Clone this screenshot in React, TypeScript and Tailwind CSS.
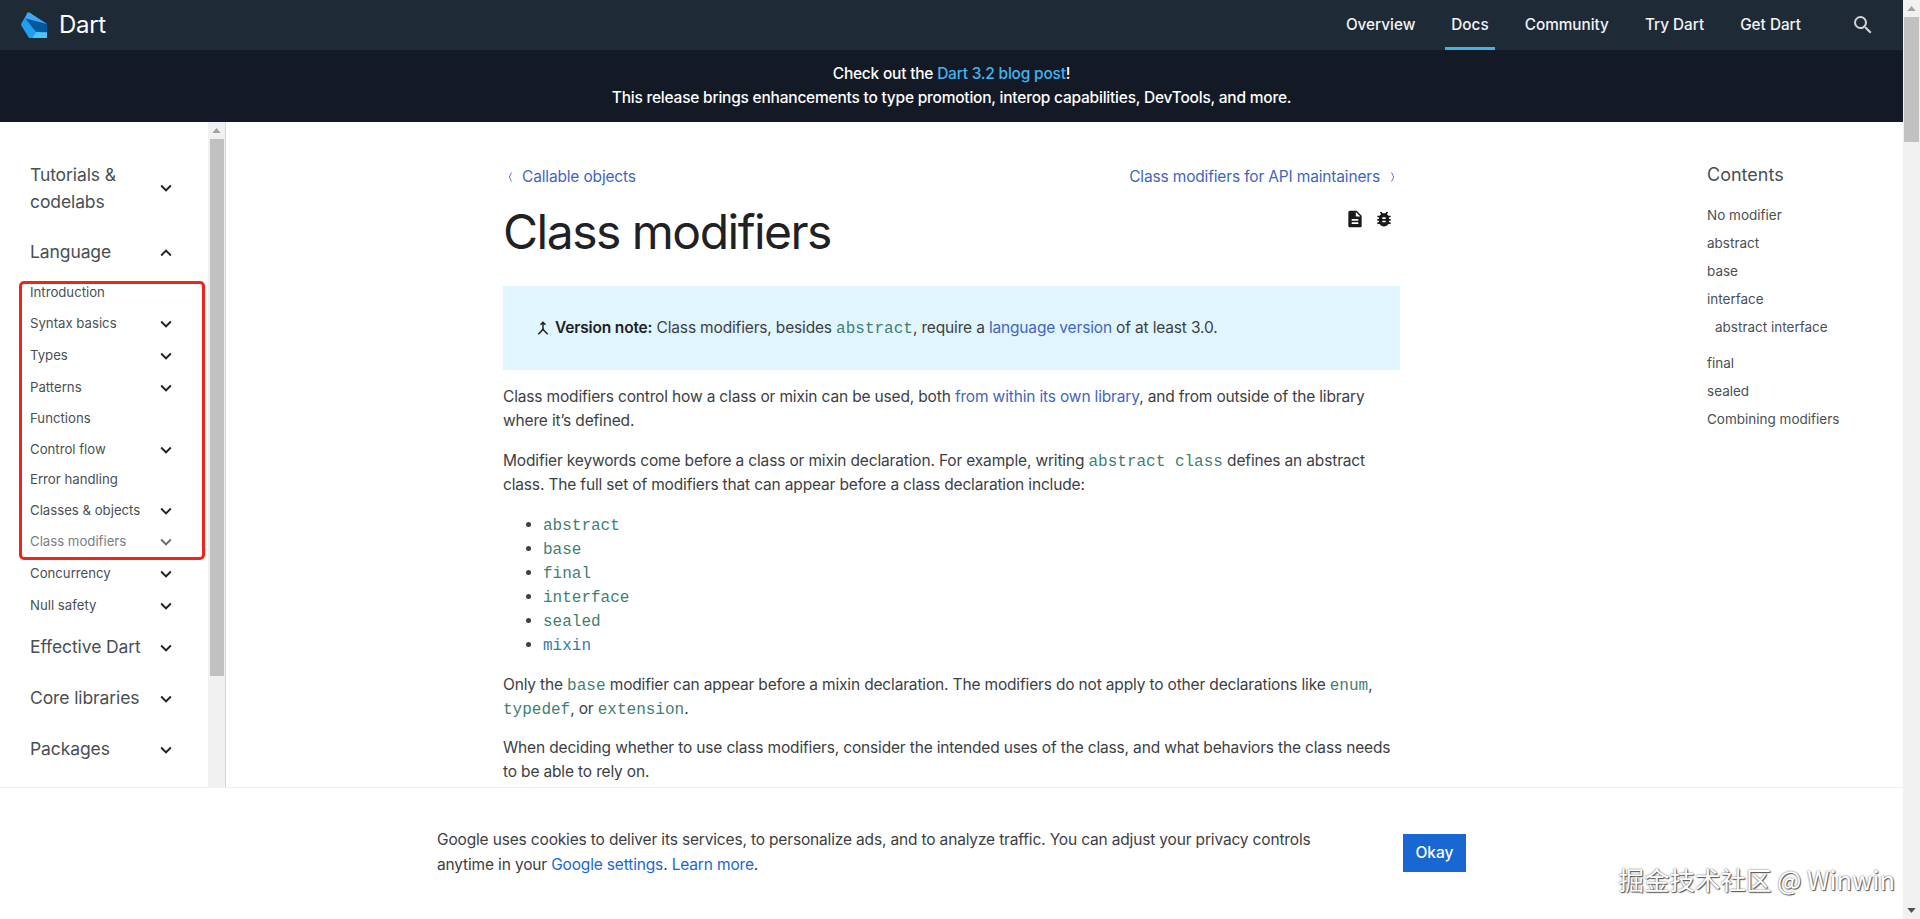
import React from 'react';
import { MdBugReport, MdDescription, MdExpandLess, MdExpandMore, MdMerge, MdSearch } from 'react-icons/md';

const font = "font-['Inter','Noto_Sans',sans-serif]";

const navLinks = ['Overview', 'Docs', 'Community', 'Try Dart', 'Get Dart'];

const languageItems: { label: string; open?: boolean; muted?: boolean; h: string }[] = [
  { label: 'Introduction', h: 'h-[30px]' },
  { label: 'Syntax basics', open: true, h: 'h-[32px]' },
  { label: 'Types', open: true, h: 'h-[32px]' },
  { label: 'Patterns', open: true, h: 'h-[32px]' },
  { label: 'Functions', h: 'h-[30px]' },
  { label: 'Control flow', open: true, h: 'h-[31px]' },
  { label: 'Error handling', h: 'h-[30px]' },
  { label: 'Classes & objects', open: true, h: 'h-[31px]' },
  { label: 'Class modifiers', open: true, muted: true, h: 'h-[32px]' },
  { label: 'Concurrency', open: true, h: 'h-[32px]' },
  { label: 'Null safety', open: true, h: 'h-[32px]' },
];

const tocItems = [
  { label: 'No modifier', h: 'h-[28px]' },
  { label: 'abstract', h: 'h-[28px]' },
  { label: 'base', h: 'h-[28px]' },
  { label: 'interface', h: 'h-[28px]' },
  { label: 'abstract interface', h: 'h-[36px] pl-2 pb-2' },
  { label: 'final', h: 'h-[28px]' },
  { label: 'sealed', h: 'h-[28px]' },
  { label: 'Combining modifiers', h: 'h-[28px]' },
];

const Code: React.FC<{ children: React.ReactNode; blue?: boolean }> = ({ children, blue }) => (
  <code className={`font-['Liberation_Mono',monospace] text-[16px] leading-none tracking-normal ${blue ? 'text-[#2f7cb3]' : 'text-[#3f7f74]'}`}>{children}</code>
);

const A: React.FC<{ children: React.ReactNode }> = ({ children }) => <a className="text-[#3f66bd]">{children}</a>;

const DartLogo = () => (
  <svg viewBox="0 0 26 26" className="w-[26px] h-[26px]">
    <path d="M6.5.7.6 11c-.6 1-.6 2 0 3L8 26h18V12L12 3C10 1.6 8 0 6.5.7z" fill="#1f9fee" />
    <path d="M6.5.7 4.5 6.5 26 12 12 3C10 1.6 8 0 6.5.7z" fill="#42a5f5" />
    <path d="M4.5 6.5 26 12v8.5L15 20z" fill="#01579b" />
    <path d="M15 20l11 .5V26H11.5z" fill="#4fc3f7" />
  </svg>
);

const ScrollArrow: React.FC<{ down?: boolean }> = ({ down }) => (
  <svg viewBox="0 0 10 6" className="w-[9px] h-[5px]">
    <path d={down ? 'M0 0h10L5 6z' : 'M5 0l5 6H0z'} fill={down ? '#505050' : '#a3a3a3'} />
  </svg>
);

const Chevron: React.FC<{ left?: boolean }> = ({ left }) => (
  <svg viewBox="0 0 8 16" className="w-[6px] h-[14px]" fill="none" stroke="#3f66bd" strokeWidth="1.1">
    <path d={left ? 'M6 2 3 8l3 6' : 'M2 2l3 6-3 6'} />
  </svg>
);

const Header = () => (
  <header className="h-[50px] shrink-0 bg-[#1f2a37] flex items-center pl-[21px] pr-[28px] text-white">
    <DartLogo />
    <span className="ml-3 text-[24px] tracking-[-0.3px]">Dart</span>
    <nav className="ml-auto flex items-center h-full">
      {navLinks.map(link => (
        <div key={link} className="relative h-full flex items-center px-[18px] text-[15.3px] font-medium text-[#f1f3f4]">
          {link}
          {link === 'Docs' && <span className="absolute left-[12px] right-[12px] bottom-0 h-[3px] bg-[#40b4e5]" />}
        </div>
      ))}
      <MdSearch className="ml-[32px] text-[#d0d4d9]" size={24} />
    </nav>
  </header>
);

const Banner = () => (
  <div className="h-[72px] shrink-0 bg-[#131a26] flex flex-col items-center justify-center text-white text-[15.5px] leading-[24px] font-medium tracking-[-0.22px]">
    <p>Check out the <a className="text-[#40b4f0]">Dart 3.2 blog post</a>!</p>
    <p>This release brings enhancements to type promotion, interop capabilities, DevTools, and more.</p>
  </div>
);

const Sidebar = () => (
  <aside className="w-[226px] shrink-0 flex border-r border-[#d6d6d6] overflow-hidden">
    <div className="w-[208px] shrink-0 pt-[27px] text-[#4a4f54]">
      <div className="flex items-center justify-between pl-[30px] pr-[31px] py-3 text-[17.5px] tracking-[-0.1px] leading-[27px]">
        <span className="w-[110px]">Tutorials & codelabs</span>
        <MdExpandMore className="text-[#212121]" size={22} />
      </div>
      <div className="h-[51px] flex items-center justify-between pl-[30px] pr-[31px] text-[17.5px] tracking-[-0.1px]">
        Language
        <MdExpandLess className="text-[#212121]" size={22} />
      </div>
      {languageItems.map(item => (
        <div key={item.label} className={`${item.h} flex items-center justify-between pl-[30px] pr-[31px] text-[13.2px] ${item.muted ? 'text-[#7a7f85]' : ''}`}>
          {item.label}
          {item.open && <MdExpandMore className={item.muted ? 'text-[#6b6b6b]' : 'text-[#212121]'} size={22} />}
        </div>
      ))}
      {['Effective Dart', 'Core libraries', 'Packages'].map(label => (
        <div key={label} className="h-[51px] flex items-center justify-between pl-[30px] pr-[31px] text-[17.5px] tracking-[-0.1px]">
          {label}
          <MdExpandMore className="text-[#212121]" size={22} />
        </div>
      ))}
    </div>
    <div className="w-[17px] bg-[#f1f1f1] flex flex-col items-center">
      <div className="h-[17px] flex items-center justify-center"><ScrollArrow /></div>
      <div className="w-[14px] h-[537px] bg-[#c1c1c1]" />
    </div>
  </aside>
);

const Article = () => (
  <main className="w-[897px] shrink-0 ml-[277px] pt-[43px] text-[15.5px] tracking-[-0.16px] leading-[24px] text-[#3c4043]">
    <div className="flex items-center justify-between px-1 h-[24px] text-[#3f66bd]">
      <a className="flex items-center gap-[9px]"><Chevron left />Callable objects</a>
      <a className="flex items-center gap-[10px]">Class modifiers for API maintainers<Chevron /></a>
    </div>
    <div className="flex justify-between mt-[10px] h-[76px]">
      <h1 className="text-[48px] leading-[66px] tracking-[-1.5px] text-[#202124] font-normal">Class modifiers</h1>
      <div className="flex gap-[9px] pr-[6px] pt-[10px] text-[#1a1a1a]">
        <MdDescription size={20} />
        <MdBugReport size={20} />
      </div>
    </div>
    <div className="h-[84px] mt-[11px] bg-[#e1f5fe] flex items-center pl-[31px]">
      <MdMerge size={18} className="text-[#202124] mr-[3px]" />
      <p><b className="font-semibold text-[#202124]">Version note:</b> Class modifiers, besides <Code>abstract</Code>, require a <A>language version</A> of at least 3.0.</p>
    </div>
    <p className="mt-[15px]">Class modifiers control how a class or mixin can be used, both <A>from within its own library</A>, and from outside of the library where it’s defined.</p>
    <p className="mt-[16px]">Modifier keywords come before a class or mixin declaration. For example, writing <Code>abstract class</Code> defines an abstract class. The full set of modifiers that can appear before a class declaration include:</p>
    <ul className="mt-[16px] pl-[40px] list-disc">
      {['abstract', 'base', 'final', 'interface', 'sealed'].map(k => <li key={k}><Code>{k}</Code></li>)}
      <li><Code blue>mixin</Code></li>
    </ul>
    <p className="mt-[16px]">Only the <Code>base</Code> modifier can appear before a mixin declaration. The modifiers do not apply to other declarations like <Code>enum</Code>, <Code>typedef</Code>, or <Code>extension</Code>.</p>
    <p className="mt-[15px]">When deciding whether to use class modifiers, consider the intended uses of the class, and what behaviors the class needs to be able to rely on.</p>
  </main>
);

const Toc = () => (
  <aside className="ml-[307px] pt-[41px] w-[170px] shrink-0 text-[#4a4f54]">
    <h2 className="text-[18px] leading-[24px] mb-[14px]">Contents</h2>
    {tocItems.map(item => (
      <div key={item.label} className={`${item.h} flex items-center text-[13.5px] whitespace-nowrap`}>{item.label}</div>
    ))}
  </aside>
);

const CookieBar = () => (
  <div className="absolute left-0 right-[17px] bottom-0 h-[132px] bg-white border-t border-[#eeeeee] flex items-start pl-[437px] pt-[39px]">
    <p className="w-[880px] text-[15.5px] tracking-[-0.16px] leading-[25px] text-[#3c4043]">
      Google uses cookies to deliver its services, to personalize ads, and to analyze traffic. You can adjust your privacy controls anytime in your <a className="text-[#1967d2]">Google settings</a>. <a className="text-[#1967d2]">Learn more</a>.
    </p>
    <button className="ml-[86px] mt-[7px] w-[63px] h-[38px] bg-[#1967d2] text-white text-[15.5px] font-medium">Okay</button>
  </div>
);

export default function App() {
  return (
    <div className={`relative w-[1920px] h-[919px] overflow-hidden flex bg-white ${font}`}>
      <div className="w-[1903px] shrink-0 flex flex-col">
        <Header />
        <Banner />
        <div className="flex flex-1 min-h-0 overflow-hidden">
          <Sidebar />
          <Article />
          <Toc />
        </div>
      </div>
      {/* page scrollbar */}
      <div className="w-[17px] shrink-0 bg-[#f1f1f1] flex flex-col items-center">
        <div className="h-[17px] flex items-center justify-center"><ScrollArrow /></div>
        <div className="w-[15px] h-[125px] bg-[#c1c1c1]" />
        <div className="mt-auto h-[17px] flex items-center justify-center"><ScrollArrow down /></div>
      </div>
      <CookieBar />
      {/* red annotation drawn over the sidebar */}
      <div className="absolute left-[19px] top-[281px] w-[186px] h-[279px] border-[3px] border-[#f0241a] rounded-[5px]" />
      <div className="absolute right-[25px] bottom-[25px] text-[25.5px] leading-[30px] text-white [text-shadow:0_0_2px_#555,1px_1px_1px_#555] font-['Noto_Sans_CJK_SC','Liberation_Sans',sans-serif]">掘金技术社区 @ Winwin</div>
    </div>
  );
}
